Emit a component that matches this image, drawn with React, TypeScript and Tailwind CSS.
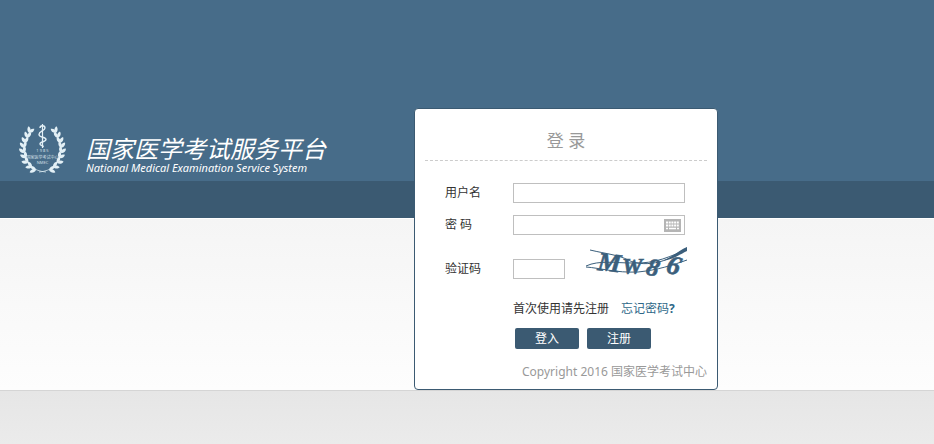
import React, { useState } from 'react';

type FieldRowProps = {
    id: string;
    label: string;
    children: React.ReactNode;
};

const inputClass = 'h-5 border border-[#bfbfbf] bg-white px-1 text-xs outline-none focus:border-[#3b5a72]';

// leaf positions on the right branch, bottom to top
const leaves = [
    { x: 29, y: 46, r: -8 },
    { x: 33, y: 43, r: -25 },
    { x: 37, y: 39, r: -40 },
    { x: 39, y: 34, r: -55 },
    { x: 41, y: 29, r: -70 },
    { x: 41, y: 24, r: -80 },
    { x: 40, y: 19, r: -90 },
    { x: 38, y: 14, r: -100 },
    { x: 36, y: 9, r: -115 },
];

const Branch: React.FC = () => (
    <g>
        <path d="M19 48C32 47 39 40 41 28C41 19 38 13 34 6" fill="none" stroke="currentColor" strokeWidth="0.7" />
        {leaves.map((leaf) => (
            <g key={leaf.y} transform={`translate(${leaf.x} ${leaf.y}) rotate(${leaf.r})`}>
                <path d="M0 0C1 -3 4 -4 6 -3C5 0 3 1 0 0Z" />
                <path d="M0 0C1 3 4 4 6 3C5 0 3 -1 0 0Z" />
            </g>
        ))}
    </g>
);

const Emblem: React.FC = () => (
    <svg viewBox="0 0 46 50" className="h-[50px] w-[46px] shrink-0 overflow-visible text-[#e3f0f6]" fill="currentColor" aria-hidden="true">
        <Branch />
        <g transform="matrix(-1 0 0 1 45 0)">
            <Branch />
        </g>
        <path d="M22.5 0V24" stroke="currentColor" strokeWidth="1.2" />
        <path
            d="M20 4C20 1 25 1 25 4C25 7 19 7 19 10.5C19 14 26 12.5 26 15.5C26 18 20 17.5 20 20C20 22 24 21 23 23"
            fill="none"
            stroke="currentColor"
            strokeWidth="1.4"
        />
        <g opacity="0.85" textAnchor="middle">
            <text x="22.5" y="28" fontSize="4">1 9 8 5</text>
            <text x="22.5" y="35" fontSize="4">国家医学考试中心</text>
            <text x="22.5" y="40" fontSize="4">NMEC</text>
        </g>
    </svg>
);

const KeyboardIcon: React.FC = () => (
    <svg viewBox="0 0 17 13" className="h-[13px] w-[17px]" aria-hidden="true">
        <rect width="17" height="13" fill="#b5b5b5" />
        <path d="M2 3.5H15M2 6.5H15" stroke="#fff" strokeWidth="2" strokeDasharray="2 0.7" />
        <path d="M2 9.5H4M5 9.5H12M13 9.5H15" stroke="#fff" strokeWidth="1.5" />
    </svg>
);

const Captcha: React.FC = () => (
    <svg viewBox="0 0 102 32" className="h-8 w-[102px] overflow-visible" role="img" aria-label="MW86">
        <g
            fill="#3b5f7c"
            stroke="#3b5f7c"
            strokeWidth="0.6"
            fontFamily="'Liberation Serif', serif"
            fontWeight="bold"
            fontStyle="italic"
        >
            <text x="12" y="23" fontSize="26" transform="rotate(6 12 23)">M</text>
            <text x="37" y="27" fontSize="23">W</text>
            <text x="60" y="27" fontSize="25" transform="rotate(14 60 27)">8</text>
            <text x="80" y="25" fontSize="27" transform="rotate(16 80 25)">6</text>
        </g>
        <g fill="none" stroke="#3b5f7c" strokeWidth="1">
            <path d="M5 3C22 7 34 8 43 13C53 18 65 17 74 15C86 12 94 5 102 1" />
            <path d="M1 20C15 21 31 26 53 25C73 23 88 18 102 13" />
            <path d="M1 19C14 13 30 16 48 16C70 17 87 9 102 2" />
        </g>
        <path d="M77 14C88 10 94 3 102 0V4C92 9 87 13 77 14Z" fill="#3b5f7c" />
    </svg>
);

const FieldRow: React.FC<FieldRowProps> = ({ id, label, children }) => (
    <div className="flex items-center">
        <label htmlFor={id} className="w-[68px] shrink-0">
            {label}
        </label>
        {children}
    </div>
);

const LoginCard: React.FC = () => {
    const [username, setUsername] = useState('');
    const [password, setPassword] = useState('');
    const [code, setCode] = useState('');

    return (
        <form
            onSubmit={(e) => e.preventDefault()}
            className="w-[304px] shrink-0 rounded border border-[#3b5a72] bg-white px-2.5 pb-[7px] text-xs leading-5 text-[#333]"
        >
            <h2 className="border-b border-dashed border-[#ccc] pt-5 pb-[7px] text-center text-[17px] leading-6 text-[#999]">
                登 录
            </h2>

            <div className="flex flex-col gap-3 pt-[22px] pl-5">
                <FieldRow id="username" label="用户名">
                    <input
                        id="username"
                        type="text"
                        value={username}
                        onChange={(e) => setUsername(e.target.value)}
                        className={`${inputClass} w-[172px]`}
                    />
                </FieldRow>
                <FieldRow id="password" label="密 码">
                    <div className="relative">
                        <input
                            id="password"
                            type="password"
                            value={password}
                            onChange={(e) => setPassword(e.target.value)}
                            className={`${inputClass} block w-[172px] pr-6`}
                        />
                        <button type="button" aria-label="软键盘" className="absolute top-1 right-1">
                            <KeyboardIcon />
                        </button>
                    </div>
                </FieldRow>
            </div>

            <div className="flex items-center pt-3 pl-5">
                <label htmlFor="code" className="w-[68px] shrink-0 pt-3">
                    验证码
                </label>
                <input
                    id="code"
                    type="text"
                    value={code}
                    onChange={(e) => setCode(e.target.value)}
                    className={`${inputClass} mt-3 w-[52px]`}
                />
                <button type="button" className="ml-5">
                    <Captcha />
                </button>
            </div>

            <div className="flex gap-3 pt-5 pl-[88px]">
                <span>首次使用请先注册</span>
                <a href="#forgot" className="text-[#2d6788]">
                    忘记密码<b>?</b>
                </a>
            </div>

            <div className="flex gap-2 pt-[9px] pl-[90px]">
                <button type="submit" className="h-[21px] w-16 rounded-xs bg-[#3b5a72] text-white">
                    登入
                </button>
                <button type="button" className="h-[21px] w-16 rounded-xs bg-[#3b5a72] text-white">
                    注册
                </button>
            </div>

            <p className="pt-[13px] text-right text-[#999]">Copyright 2016 国家医学考试中心</p>
        </form>
    );
};

const App: React.FC = () => {
    return (
        <main className="grid min-h-screen font-['Noto_Sans','Noto_Sans_CJK_SC',sans-serif]">
            {/* background bands */}
            <div className="col-start-1 row-start-1 flex flex-col" aria-hidden="true">
                <div className="h-[181px] bg-[#476c89]" />
                <div className="h-[37px] bg-[#3b5a72]" />
                <div className="h-[172px] border-t border-white bg-linear-to-b from-[#f5f5f5] to-[#fdfdfd]" />
                <div className="grow border-t border-[#d5d5d5] bg-linear-to-b from-[#e6e6e6] to-[#ebebeb]" />
            </div>

            <div className="col-start-1 row-start-1 flex items-start justify-between pt-[108px] pr-[216px] pl-5">
                <header className="flex pt-4 text-white">
                    <Emblem />
                    <div className="pt-2.5 pl-5 italic">
                        <h1 className="font-['Noto_Sans_CJK_SC',sans-serif] text-2xl leading-7">国家医学考试服务平台</h1>
                        <p className="text-[11px] leading-3">National Medical Examination Service System</p>
                    </div>
                </header>
                <LoginCard />
            </div>
        </main>
    );
};

export default App;
